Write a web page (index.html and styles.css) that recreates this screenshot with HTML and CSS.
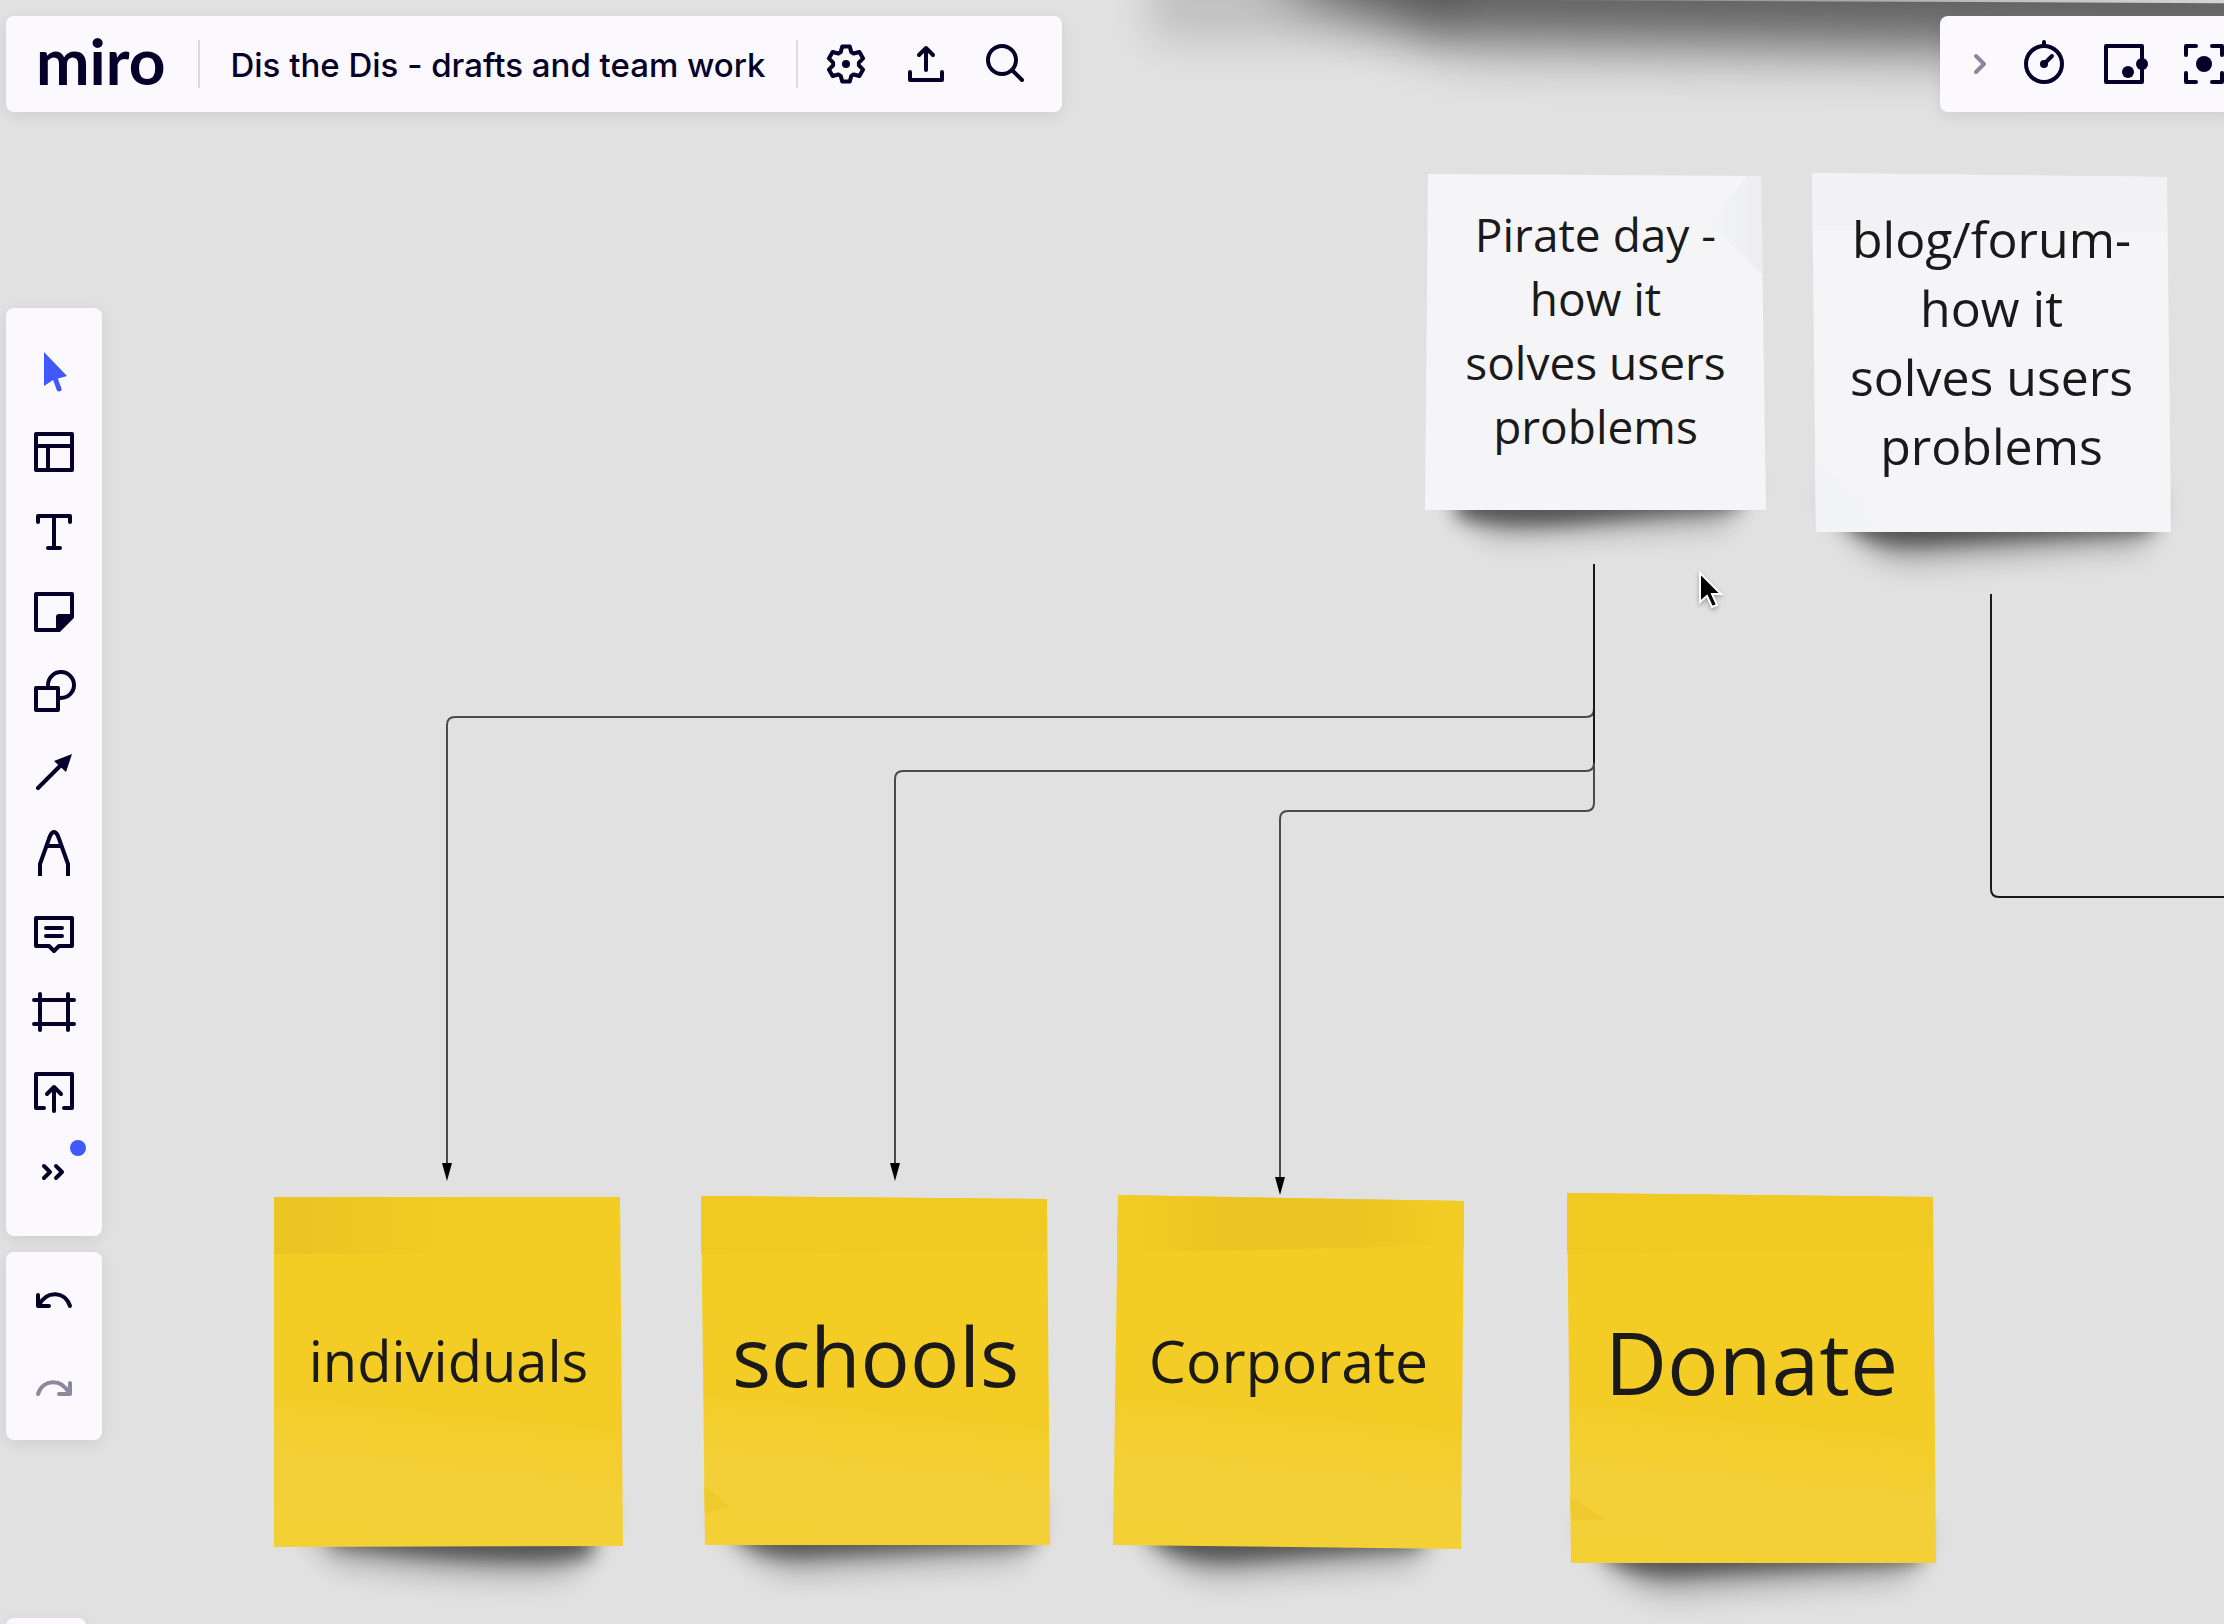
FILE: index.html
```html
<!DOCTYPE html>
<html lang="en">
<head>
<meta charset="utf-8">
<meta name="viewport" content="width=device-width, initial-scale=1">
<title>Dis the Dis - drafts and team work</title>
<link rel="stylesheet" href="styles.css">
</head>
<body>
<div class="app">
  <main class="board" aria-label="Board">
    <svg class="layer" aria-hidden="true">
      <defs>
        <filter id="wide" x="-60%" y="-100%" width="220%" height="300%"><feGaussianBlur stdDeviation="20"/></filter>
        <filter id="far" x="-30%" y="-100%" width="160%" height="300%"><feGaussianBlur stdDeviation="28"/></filter>
        <filter id="soft" x="-20%" y="-150%" width="140%" height="400%"><feGaussianBlur stdDeviation="9"/></filter>
        <filter id="haze" x="-20%" y="-150%" width="140%" height="400%"><feGaussianBlur stdDeviation="14"/></filter>
        <linearGradient id="yellow" x1="0.1" y1="0" x2="0" y2="1">
          <stop offset="0" stop-color="#f3cc24"/>
          <stop offset="0.55" stop-color="#f3cc25"/>
          <stop offset="0.76" stop-color="#f3d038"/>
          <stop offset="1" stop-color="#f3d033"/>
        </linearGradient>
        <linearGradient id="band-left"><stop offset="0" stop-color="#ebc422"/><stop offset="0.6" stop-color="#f3cc24"/></linearGradient>
        <linearGradient id="band-mid"><stop offset="0" stop-color="#f3cc24"/><stop offset="0.35" stop-color="#ebc421"/><stop offset="0.65" stop-color="#ebc421"/><stop offset="1" stop-color="#f3cc24"/></linearGradient>
        <linearGradient id="fold" x1="0" x2="1"><stop offset="0" stop-color="#f3f4f8"/><stop offset="1" stop-color="#ededf1"/></linearGradient>
        <linearGradient id="edge"><stop offset="0" stop-color="#777"/><stop offset="0.6" stop-color="#c4c4c4"/><stop offset="1" stop-color="#e4e4e4"/></linearGradient>
      </defs>
      <path d="M1150-90V40H1460V-90Z" fill="#000" opacity="0.14" filter="url(#wide)"/>
      <path d="M1270-160L1290-14L1460 42L2400 56V-160Z" fill="#000" opacity="0.57" filter="url(#far)"/>
      <path d="M1500 0H2400V4Z" fill="url(#edge)"/>
      <g class="wires">
        <path d="M1594 564V709Q1594 717 1586 717H455Q447 717 447 725V1164"/>
        <path d="M1594 564V763Q1594 771 1586 771H903Q895 771 895 779V1164"/>
        <path d="M1594 564V803Q1594 811 1586 811H1288Q1280 811 1280 819V1178"/>
        <path class="dark" d="M1594 564V763"/>
        <path class="dark" d="M1991 594V889Q1991 897 1999 897H2400"/>
      </g>
      <path d="M442 1163H452L447 1181ZM890 1163H900L895 1181ZM1275 1177H1285L1280 1195Z"/>
    </svg>

    <article class="note pirate">
      <svg viewBox="0 0 341 336" aria-hidden="true">
        <path d="M20 300Q40 362 80 364L300 352L326 300Z" opacity="0.24" filter="url(#haze)"/>
        <path d="M32 300V344Q80 354 140 350L314 334V300Z" opacity="0.5" filter="url(#soft)"/>
        <path d="M3 0L336 2L341 336H0Z" fill="#f5f5f8"/>
        <path d="M322 2H336L338 102L284 48Z" fill="url(#fold)"/>
      </svg>
      <p>Pirate day - how it solves users problems</p>
    </article>
    <article class="note blog">
      <svg viewBox="0 0 359 359" aria-hidden="true">
        <path d="M14 320Q50 392 100 390L330 374L350 320Z" opacity="0.26" filter="url(#haze)"/>
        <path d="M30 320L36 354Q64 376 120 372L342 358V320Z" opacity="0.5" filter="url(#soft)"/>
        <path d="M0 0L355 4L359 359H4Z" fill="#f5f5f8"/>
        <path d="M0 0L355 4V60L1 57Z" fill="#f2f2f5"/>
        <path d="M3 288L50 326L62 359H4Z" fill="#f3f4f7"/>
      </svg>
      <p>blog/forum- how it solves users problems</p>
    </article>
    <article class="note individuals">
      <svg viewBox="0 0 349 350" aria-hidden="true">
        <path d="M14 310L60 366Q180 384 280 380Q310 380 336 310Z" opacity="0.24" filter="url(#haze)"/>
        <path d="M40 310L60 348Q180 366 270 364L318 360V310Z" opacity="0.5" filter="url(#soft)"/>
        <path d="M0 0H346L349 349L0 350Z" fill="url(#yellow)"/>
        <path d="M0 0H346V57H0Z" fill="url(#band-left)"/>
      </svg>
      <p>individuals</p>
    </article>
    <article class="note large schools">
      <svg viewBox="0 0 349 349" aria-hidden="true">
        <path d="M14 310Q50 380 100 378L320 364L340 310Z" opacity="0.24" filter="url(#haze)"/>
        <path d="M28 310L36 344Q64 365 120 360L334 348V310Z" opacity="0.5" filter="url(#soft)"/>
        <path d="M0 0L346 3L349 349H4Z" fill="url(#yellow)"/>
        <path d="M0 0L346 3V55L0 58Z" fill="#f0c922"/>
        <path d="M3 290L28 310L4 318Z" fill="#efca2e"/>
      </svg>
      <p>schools</p>
    </article>
    <article class="note corporate">
      <svg viewBox="0 0 351 354" aria-hidden="true">
        <path d="M14 310Q50 386 110 384L300 370L330 310Z" opacity="0.24" filter="url(#haze)"/>
        <path d="M30 310L38 346Q70 370 130 366L310 352V310Z" opacity="0.5" filter="url(#soft)"/>
        <path d="M5 0L351 6L348 354L0 350Z" fill="url(#yellow)"/>
        <path d="M5 0L351 6V50L4 58Z" fill="url(#band-mid)"/>
      </svg>
      <p>Corporate</p>
    </article>
    <article class="note large donate">
      <svg viewBox="0 0 369 370" aria-hidden="true">
        <path d="M14 330Q50 404 110 402L340 386L360 330Z" opacity="0.24" filter="url(#haze)"/>
        <path d="M30 330L38 364Q70 388 130 382L354 369V330Z" opacity="0.5" filter="url(#soft)"/>
        <path d="M0 0L366 4L369 370H4Z" fill="url(#yellow)"/>
        <path d="M0 0L366 4V56L0 61Z" fill="#f0c922"/>
        <path d="M3 304L38 326L4 328Z" fill="#efca2e"/>
      </svg>
      <p>Donate</p>
    </article>

    <svg class="pointer" viewBox="0 0 28 42" aria-hidden="true">
      <path d="M3 3V32L10 26L15 37L20 35L15 24H24Z" fill="#000" stroke="#fff" stroke-width="2"/>
    </svg>
  </main>

  <div class="chrome">
    <header class="top">
      <div class="panel bar">
        <a class="logo" href="#">miro</a>
        <button class="title" type="button">Dis the Dis - drafts and team work</button>
        <div class="actions">
          <button class="tool" type="button" aria-label="Settings"><svg viewBox="0 0 48 48"><path d="M18.700 12.100L20.300 6.400H27.700L29.300 12.100L31.600 13.500L37.400 12L41.100 18.400L36.900 22.600V25.400L41.100 29.600L37.400 36L31.600 34.500L29.300 35.900L27.700 41.600H20.300L18.700 35.900L16.400 34.500L10.600 36L6.900 29.600L11.100 25.400V22.600L6.900 18.400L10.600 12L16.400 13.500Z"/><circle class="solid" cx="24" cy="24" r="4"/></svg></button>
          <button class="tool" type="button" aria-label="Export"><svg viewBox="0 0 48 48"><path d="M24 30V8M17 15L24 8L31 15M8 32V40H40V32"/></svg></button>
          <button class="tool" type="button" aria-label="Search"><svg viewBox="0 0 48 48"><circle cx="20" cy="20" r="14"/><path d="M30 30L40 40"/></svg></button>
        </div>
      </div>
      <div class="panel side">
        <button class="tool narrow dim" type="button" aria-label="Collapse"><svg viewBox="0 0 48 48"><path d="M20 16L28 24L20 32"/></svg></button>
        <button class="tool" type="button" aria-label="Timer"><svg viewBox="0 0 48 48"><circle cx="24" cy="24" r="18"/><path d="M24 2V6M25 23L32 16"/><circle class="solid" cx="24" cy="24" r="4"/></svg></button>
        <button class="tool" type="button" aria-label="Video chat"><svg viewBox="0 0 48 48"><path d="M6 6H42V42H6Z"/><circle class="solid" cx="28" cy="32" r="6"/><circle class="solid" cx="42" cy="24" r="6"/></svg></button>
        <button class="tool" type="button" aria-label="Attention"><svg viewBox="0 0 48 48"><path d="M6 15V6H16M32 6H42V15M42 33V42H32M16 42H6V33"/><circle class="solid" cx="24" cy="24" r="8"/></svg></button>
      </div>
    </header>

    <div class="rail">
      <nav class="panel tools" aria-label="Tools">
        <button class="tool active" type="button" aria-label="Select"><svg viewBox="0 0 48 48"><path class="solid" d="M14 4V38L23 32L37 28Z"/><path class="stem" d="M25 30L29 41"/></svg></button>
        <button class="tool" type="button" aria-label="Templates"><svg viewBox="0 0 48 48"><path d="M6 6H42V42H6ZM6 18H42M18 18V42"/></svg></button>
        <button class="tool" type="button" aria-label="Text"><svg viewBox="0 0 48 48"><path d="M8 14V8H40V14M24 8V40M18 40H30"/></svg></button>
        <button class="tool" type="button" aria-label="Sticky note"><svg viewBox="0 0 48 48"><path d="M6 6H42V29L29 42H6Z"/><path class="solid" d="M43 26V30L30 43H26V29Q26 26 29 26Z"/></svg></button>
        <button class="tool" type="button" aria-label="Shapes"><svg viewBox="0 0 48 48"><circle cx="31" cy="17" r="13"/><path class="cover" d="M6 20H28V42H6Z"/></svg></button>
        <button class="tool" type="button" aria-label="Line"><svg viewBox="0 0 48 48"><path d="M8 40L32 16"/><path class="solid" d="M42 6L36 24L24 13Z"/></svg></button>
        <button class="tool" type="button" aria-label="Pen"><svg viewBox="0 0 48 48"><path class="butt" d="M10 48V36L20 8Q24 0 28 8L38 36V48M17 18H31"/></svg></button>
        <button class="tool" type="button" aria-label="Comment"><svg viewBox="0 0 48 48"><path d="M6 10H42V38H29L24 43L19 38H6ZM16 20H32M16 28H32"/></svg></button>
        <button class="tool" type="button" aria-label="Frame"><svg viewBox="0 0 48 48"><path d="M10 6V42M38 6V42M4 12H44M4 36H44"/></svg></button>
        <button class="tool" type="button" aria-label="Upload"><svg viewBox="0 0 48 48"><path d="M14 40H6V6H42V40H34M24 43V19M17 26L24 19L31 26"/></svg></button>
        <button class="tool more" type="button" aria-label="More tools"><svg viewBox="0 0 48 48"><path d="M14 18L20 24L14 30M26 18L32 24L26 30"/></svg></button>
      </nav>
      <div class="panel history">
        <button class="tool" type="button" aria-label="Undo"><svg viewBox="0 0 48 48"><path d="M8 17V28H19M9 27C17 12 35 13 40 28"/></svg></button>
        <button class="tool dim" type="button" aria-label="Redo"><svg viewBox="0 0 48 48"><path d="M40 17V28H29M39 27C31 12 13 13 8 28"/></svg></button>
      </div>
      <div class="panel dock"></div>
    </div>
  </div>
</div>
</body>
</html>
```
FILE: styles.css
```css
* { box-sizing: border-box; }

body {
  margin: 0;
  background: #e1e1e1;
  font-family: "Open Sans", "Noto Sans", sans-serif;
  color: #1a1a1a;
}

button {
  margin: 0;
  padding: 0;
  border: 0;
  background: none;
  color: inherit;
  font: inherit;
}

.app {
  position: relative;
  height: 100vh;
  overflow: hidden;
}

/* Free canvas: everything here sits at its board coordinates */
.board {
  position: absolute;
  inset: 0;
  overflow: hidden;
}

.layer {
  position: absolute;
  inset: 0;
  width: 100%;
  height: 100%;
}

.wires { fill: none; stroke: #4a4a4a; stroke-width: 2; }
.wires .dark { stroke: #1a1a1a; }

.note {
  position: absolute;
  display: flex;
  align-items: center;
  justify-content: center;
  padding: 0 36px 24px;
  text-align: center;
}

.note svg {
  position: absolute;
  inset: 0;
  width: 100%;
  height: 100%;
  overflow: visible;
}

.note p { position: relative; margin: 0; }
.large { padding: 0 0 32px; }

.pirate { left: 1425px; top: 174px; width: 341px; height: 336px; font-size: 46px; line-height: 64px; }
.blog { left: 1812px; top: 173px; width: 359px; height: 359px; padding-bottom: 20px; font-size: 50px; line-height: 69px; }
.individuals { left: 274px; top: 1197px; width: 349px; height: 350px; font-size: 56px; line-height: 76px; }
.schools { left: 701px; top: 1196px; width: 349px; height: 349px; font-size: 82px; line-height: 112px; }
.corporate { left: 1113px; top: 1195px; width: 351px; height: 354px; font-size: 59px; line-height: 80px; }
.donate { left: 1567px; top: 1193px; width: 369px; height: 370px; font-size: 86px; line-height: 118px; }

.pointer {
  position: absolute;
  left: 1697px;
  top: 570px;
  width: 28px;
  height: 42px;
  filter: drop-shadow(0 2px 2px rgba(0, 0, 0, 0.3));
}

/* Floating interface */
.chrome {
  position: relative;
  display: flex;
  flex-direction: column;
  height: 100%;
  padding: 16px 0 0 6px;
  color: #050029;
}

.panel {
  border-radius: 8px;
  background: #fbf9fd;
  box-shadow: 0 4px 16px rgba(5, 0, 56, 0.08);
}

.top { display: flex; justify-content: space-between; }

.bar { display: flex; align-items: center; height: 96px; padding: 0 16px 0 30px; }

.logo {
  width: 162px;
  padding-bottom: 6px;
  color: inherit;
  font: 700 64px/72px Lato, sans-serif;
  text-decoration: none;
}

.title {
  width: 600px;
  height: 48px;
  padding-top: 2px;
  border: solid #dcdbe0;
  border-width: 0 2px;
  font: 500 33px/46px Inter, sans-serif;
  white-space: nowrap;
}

.actions { display: flex; padding-left: 8px; }

.side { display: flex; align-items: center; height: 96px; margin-right: -20px; padding-left: 16px; }

.tool {
  display: flex;
  align-items: center;
  justify-content: center;
  width: 80px;
  height: 80px;
}

.tool svg {
  width: 48px;
  height: 48px;
  fill: none;
  stroke: currentColor;
  stroke-width: 4;
  stroke-linecap: round;
  stroke-linejoin: round;
}

.tool .solid { fill: currentColor; stroke: none; }
.tool .stem { stroke-width: 5; }
.tool .cover { fill: #fbf9fd; }
.tool .butt { stroke-linecap: butt; }

.narrow { width: 48px; }
.dim { color: #8b889b; }
.active { color: #4059fb; }

.rail {
  display: flex;
  flex: 1;
  flex-direction: column;
  align-items: flex-start;
  gap: 16px;
  padding-top: 196px;
}

.tools { padding: 24px 8px; }

.more { position: relative; }

.more::after {
  content: "";
  position: absolute;
  top: 8px;
  right: 8px;
  width: 16px;
  height: 16px;
  border-radius: 50%;
  background: #4059fb;
}

.history { padding: 6px 8px; }
.history .tool { height: 88px; }

.dock { width: 80px; height: 80px; margin-top: auto; margin-bottom: -74px; }
```
